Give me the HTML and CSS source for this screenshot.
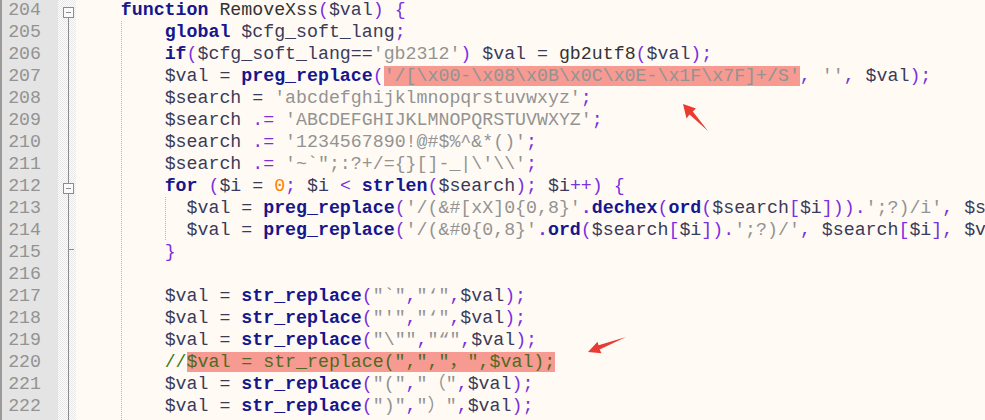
FILE: index.html
```html
<!DOCTYPE html>
<html>
<head>
<meta charset="utf-8">
<link rel="stylesheet" href="styles.css">
</head>
<body>
<div class="editor">
<div class="row"><span class="num">204</span><span class="fold f-start"><i class="box"></i></span><span class="txt">    <b class="k">function</b> RemoveXss<span class="o">(</span><span class="v">$val</span><span class="o">)</span> <span class="o">{</span></span></div>
<div class="row"><span class="num">205</span><span class="fold"></span><span class="txt g1">        <b class="k">global</b> <span class="v">$cfg_soft_lang</span><span class="o">;</span></span></div>
<div class="row"><span class="num">206</span><span class="fold"></span><span class="txt g1">        <b class="k">if</b><span class="o">(</span><span class="v">$cfg_soft_lang</span><span class="v">==</span><span class="s">'gb2312'</span><span class="o">)</span> <span class="v">$val = </span>gb2utf8<span class="o">(</span><span class="v">$val</span><span class="o">);</span></span></div>
<div class="row"><span class="num">207</span><span class="fold"></span><span class="txt g1">        <span class="v">$val = </span><b class="k">preg_replace</b><span class="o">(</span><span class="s hl">'/[\x00-\x08\x0B\x0C\x0E-\x1F\x7F]+/S'</span><span class="o">,</span> <span class="s">''</span><span class="o">,</span> <span class="v">$val</span><span class="o">);</span></span></div>
<div class="row"><span class="num">208</span><span class="fold"></span><span class="txt g1">        <span class="v">$search = </span><span class="s">'abcdefghijklmnopqrstuvwxyz'</span><span class="o">;</span></span></div>
<div class="row"><span class="num">209</span><span class="fold"></span><span class="txt g1">        <span class="v">$search </span><span class="o">.=</span> <span class="s">'ABCDEFGHIJKLMNOPQRSTUVWXYZ'</span><span class="o">;</span></span></div>
<div class="row"><span class="num">210</span><span class="fold"></span><span class="txt g1">        <span class="v">$search </span><span class="o">.=</span> <span class="s">'1234567890!@#$%^&amp;*()'</span><span class="o">;</span></span></div>
<div class="row"><span class="num">211</span><span class="fold"></span><span class="txt g1">        <span class="v">$search </span><span class="o">.=</span> <span class="s">'~`";:?+/={}[]-_|\'\\'</span><span class="o">;</span></span></div>
<div class="row"><span class="num">212</span><span class="fold"><i class="box"></i></span><span class="txt g1">        <b class="k">for</b> <span class="o">(</span><span class="v">$i = </span><span class="n">0</span><span class="o">;</span> <span class="v">$i</span> <span class="o">&lt;</span> <b class="k">strlen</b><span class="o">(</span><span class="v">$search</span><span class="o">);</span> <span class="v">$i</span><span class="o">++)</span> <span class="o">{</span></span></div>
<div class="row"><span class="num">213</span><span class="fold"></span><span class="txt g2">          <span class="v">$val = </span><b class="k">preg_replace</b><span class="o">(</span><span class="s">'/(&amp;#[xX]0{0,8}'</span><b class="o">.</b><b class="k">dechex</b><span class="o">(</span><b class="k">ord</b><span class="o">(</span><span class="v">$search</span><span class="o">[</span><span class="v">$i</span><span class="o">])).</span><span class="s">';?)/i'</span><span class="o">,</span> <span class="v">$search</span><span class="o">[</span><span class="v">$i</span><span class="o">],</span> <span class="v">$val</span><span class="o">);</span></span></div>
<div class="row"><span class="num">214</span><span class="fold"></span><span class="txt g2">          <span class="v">$val = </span><b class="k">preg_replace</b><span class="o">(</span><span class="s">'/(&amp;#0{0,8}'</span><b class="o">.</b><b class="k">ord</b><span class="o">(</span><span class="v">$search</span><span class="o">[</span><span class="v">$i</span><span class="o">]).</span><span class="s">';?)/'</span><span class="o">,</span> <span class="v">$search</span><span class="o">[</span><span class="v">$i</span><span class="o">],</span> <span class="v">$val</span><span class="o">);</span></span></div>
<div class="row"><span class="num">215</span><span class="fold"><i class="tee"></i></span><span class="txt g1">        <span class="o">}</span></span></div>
<div class="row"><span class="num">216</span><span class="fold"></span><span class="txt g1"> </span></div>
<div class="row"><span class="num">217</span><span class="fold"></span><span class="txt g1">        <span class="v">$val = </span><b class="k">str_replace</b><span class="o">(</span><span class="s">"`"</span><span class="o">,</span><span class="s">"‘"</span><span class="o">,</span><span class="v">$val</span><span class="o">);</span></span></div>
<div class="row"><span class="num">218</span><span class="fold"></span><span class="txt g1">        <span class="v">$val = </span><b class="k">str_replace</b><span class="o">(</span><span class="s">"'"</span><span class="o">,</span><span class="s">"‘"</span><span class="o">,</span><span class="v">$val</span><span class="o">);</span></span></div>
<div class="row"><span class="num">219</span><span class="fold"></span><span class="txt g1">        <span class="v">$val = </span><b class="k">str_replace</b><span class="o">(</span><span class="s">"\""</span><span class="o">,</span><span class="s">"“"</span><span class="o">,</span><span class="v">$val</span><span class="o">);</span></span></div>
<div class="row"><span class="num">220</span><span class="fold"></span><span class="txt g1">        <span class="c">//<span class="hl">$val = str_replace(",","，",$val);</span></span></span></div>
<div class="row"><span class="num">221</span><span class="fold"></span><span class="txt g1">        <span class="v">$val = </span><b class="k">str_replace</b><span class="o">(</span><span class="s">"("</span><span class="o">,</span><span class="s">"（"</span><span class="o">,</span><span class="v">$val</span><span class="o">);</span></span></div>
<div class="row"><span class="num">222</span><span class="fold"></span><span class="txt g1">        <span class="v">$val = </span><b class="k">str_replace</b><span class="o">(</span><span class="s">")"</span><span class="o">,</span><span class="s">"）"</span><span class="o">,</span><span class="v">$val</span><span class="o">);</span></span></div>
<div class="row"><span class="num">223</span><span class="fold"></span><span class="txt g1"> </span></div>
</div>
<svg class="marks" width="985" height="420" viewBox="0 0 985 420">
  <polygon fill="#ea3b33" points="683,104 696,108.5 692.8,111.5 708,131 689.5,114.6 686.5,118.5"/>
  <polygon fill="#ea3b33" points="588,352 597.5,341.8 598.6,345.2 626,337 599.6,349.6 601.5,353.3"/>
</svg>
</body>
</html>
```
FILE: styles.css
```css
html, body {
  margin: 0;
  padding: 0;
  width: 985px;
  height: 420px;
  overflow: hidden;
  background: #fffbf4;
}

.editor {
  margin-top: -1px;
  display: flex;
  flex-direction: column;
  font-family: "Liberation Mono", "Noto Sans CJK SC", monospace;
  font-size: 18.25px;
}

.row {
  display: flex;
  height: 22px;
  line-height: 22px;
}

.num {
  box-sizing: border-box;
  flex: 0 0 58px;
  border-left: 2px solid #9a9a9a;
  background: #e4e4e4;
  color: #939393;
  text-align: right;
  padding-right: 17px;
}

.fold {
  position: relative;
  flex: 0 0 18px;
  background:
    linear-gradient(#8c8c8c, #8c8c8c) 10px 0 / 1px 100% no-repeat,
    repeating-conic-gradient(#e7e7e7 0 25%, #fdfdfd 0 50%) 0 0 / 2px 2px;
}

.fold.f-start {
  background:
    linear-gradient(#8c8c8c, #8c8c8c) 10px 14px / 1px 100% no-repeat,
    repeating-conic-gradient(#e7e7e7 0 25%, #fdfdfd 0 50%) 0 0 / 2px 2px;
}

.box {
  position: absolute;
  left: 5px;
  top: 8px;
  width: 11px;
  height: 11px;
  box-sizing: border-box;
  border: 1px solid #8c8c8c;
  background: linear-gradient(#8c8c8c, #8c8c8c) 2px 4px / 5px 1px no-repeat, #fafafa;
}

.tee {
  position: absolute;
  left: 10px;
  top: 8px;
  width: 6px;
  height: 1px;
  background: #8c8c8c;
}

.txt {
  flex: 1 1 auto;
  padding-left: 1px;
  white-space: pre;
  overflow: hidden;
  color: #333333;
}

.g1 {
  background: linear-gradient(#b4b4b4 50%, transparent 50%) 45px 0 / 1px 2px repeat-y;
}

.g2 {
  background:
    linear-gradient(#b4b4b4 50%, transparent 50%) 45px 0 / 1px 2px repeat-y,
    linear-gradient(#b4b4b4 50%, transparent 50%) 89px 0 / 1px 2px repeat-y;
}

.k {
  color: #16168f;
  font-weight: bold;
}

.v {
  color: #3a3a5a;
}

.o {
  color: #7b2fe0;
}

b.o {
  font-weight: bold;
}

.s {
  color: #939393;
}

.n {
  color: #ff8000;
}

.c {
  color: #3c7d22;
}

.hl {
  background: #f69a92;
}

.c .hl {
  color: #4f6a1f;
}

.marks {
  position: absolute;
  left: 0;
  top: 0;
  pointer-events: none;
}
```
